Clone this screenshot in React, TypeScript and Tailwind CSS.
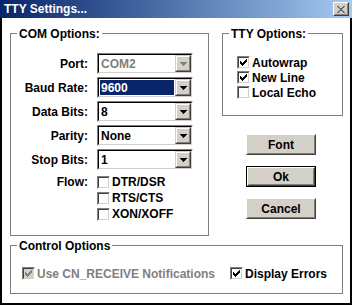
import React from "react";

const CheckMark = ({ color }: { color: string }) => (
  <svg width="9" height="9" viewBox="0 0 9 9" shapeRendering="crispEdges">
    {[
      [1, 3],
      [2, 4],
      [3, 5],
      [4, 4],
      [5, 3],
      [6, 2],
      [7, 1],
    ].map(([x, y]) => (
      <rect key={x} x={x} y={y} width="1" height="3" fill={color} />
    ))}
  </svg>
);

const CheckBox = ({ checked, disabled }: { checked?: boolean; disabled?: boolean }) => (
  <div className="w-[13px] h-[13px] shrink-0 border border-t-[#808080] border-l-[#808080] border-b-white border-r-white">
    <div
      className={
        "w-full h-full border border-t-[#404040] border-l-[#404040] border-b-[#d4d0c8] border-r-[#d4d0c8] " +
        (disabled ? "bg-[#d4d0c8]" : "bg-white")
      }
    >
      {checked && <CheckMark color={disabled ? "#808080" : "#000000"} />}
    </div>
  </div>
);

const CheckRow = ({
  label,
  checked,
  disabled,
  className,
}: {
  label: string;
  checked?: boolean;
  disabled?: boolean;
  className?: string;
}) => (
  <div className={"flex items-center gap-[2px] h-[15px] " + (className ?? "")}>
    <CheckBox checked={checked} disabled={disabled} />
    <span className={"leading-[14px] whitespace-nowrap " + (disabled ? "text-[#808080]" : "text-black")}>{label}</span>
  </div>
);

const Arrow = ({ color }: { color: string }) => (
  <svg width="7" height="4" viewBox="0 0 7 4" shapeRendering="crispEdges">
    <rect x="0" y="0" width="7" height="1" fill={color} />
    <rect x="1" y="1" width="5" height="1" fill={color} />
    <rect x="2" y="2" width="3" height="1" fill={color} />
    <rect x="3" y="3" width="1" height="1" fill={color} />
  </svg>
);

const DropButton = ({ disabled }: { disabled?: boolean }) => (
  <div className="w-[16px] h-full shrink-0 bg-[#d4d0c8] border border-t-[#d4d0c8] border-l-[#d4d0c8] border-b-[#404040] border-r-[#404040]">
    <div className="w-full h-full border border-t-white border-l-white border-b-[#808080] border-r-[#808080] flex items-center justify-center">
      <Arrow color={disabled ? "#808080" : "#000000"} />
    </div>
  </div>
);

const Combo = ({ value, selected, disabled }: { value: string; selected?: boolean; disabled?: boolean }) => (
  <div className="w-[96px] h-[21px] border border-t-[#808080] border-l-[#808080] border-b-white border-r-white">
    <div className="w-full h-full flex border border-t-black border-l-black border-b-[#d4d0c8] border-r-[#d4d0c8] bg-white">
      <div className="flex-1 p-[1px]">
        <div
          className={
            "h-full flex items-center pl-[1px] leading-[14px] " +
            (selected ? "bg-[#0a246a] text-white" : disabled ? "text-[#808080]" : "text-black")
          }
        >
          {value}
        </div>
      </div>
      <DropButton disabled={disabled} />
    </div>
  </div>
);

const Button = ({ label, isDefault }: { label: string; isDefault?: boolean }) => (
  <div className={"w-[70px] h-[21px] " + (isDefault ? "border border-black" : "")}>
    <div className="w-full h-full bg-[#d4d0c8] border border-t-white border-l-white border-b-[#404040] border-r-[#404040]">
      <div className="w-full h-full border border-t-[#d4d0c8] border-l-[#d4d0c8] border-b-[#808080] border-r-[#808080] flex items-center justify-center leading-[14px]">
        {label}
      </div>
    </div>
  </div>
);

const Group = ({
  title,
  className,
  children,
}: {
  title: string;
  className: string;
  children: React.ReactNode;
}) => (
  <div className={"relative border border-[#808080] shrink-0 " + className}>
    <span className="absolute top-[-7px] left-[6px] px-[2px] bg-white leading-[14px] whitespace-nowrap">{title}</span>
    {children}
  </div>
);

const FieldRow = ({ label, children }: { label: string; children: React.ReactNode }) => (
  <div className="flex items-center h-[21px]">
    <span className="w-[77px] text-right leading-[14px] whitespace-nowrap">{label}</span>
    <div className="ml-[9px]">{children}</div>
  </div>
);

export default function App() {
  return (
    <div className="w-[352px] h-[305px] flex flex-col bg-white text-black text-[12px] font-bold font-['Liberation_Sans',Arial,sans-serif] overflow-hidden">
      {/* Title bar */}
      <div className="h-[18px] shrink-0 flex items-center justify-between bg-gradient-to-r from-[#0a246a] to-[#a6caf0] pl-[4px] pr-[3px]">
        <span className="text-white leading-[14px] whitespace-nowrap">TTY Settings...</span>
        <div className="w-[16px] h-[14px] bg-[#d4d0c8] border border-t-white border-l-white border-b-[#404040] border-r-[#404040]">
          <div className="w-full h-full border border-t-[#d4d0c8] border-l-[#d4d0c8] border-b-[#808080] border-r-[#808080] flex items-center justify-center">
            <svg width="8" height="7" viewBox="0 0 8 7" shapeRendering="crispEdges">
              {[0, 1, 2, 3, 4, 5, 6].map((i) => (
                <React.Fragment key={i}>
                  <rect x={i} y={i} width="2" height="1" fill="#6b6b6b" />
                  <rect x={6 - i} y={i} width="2" height="1" fill="#6b6b6b" />
                </React.Fragment>
              ))}
            </svg>
          </div>
        </div>
      </div>

      {/* Body */}
      <div className="flex-1 flex flex-col border-x-2 border-b-2 border-black pl-[8px]">
        <div className="flex mt-[15px] gap-[13px]">
          {/* COM Options */}
          <Group title="COM Options:" className="w-[199px] h-[203px]">
            <div className="flex flex-col pt-[19px] gap-[3px]">
              <FieldRow label="Port:">
                <Combo value="COM2" disabled />
              </FieldRow>
              <FieldRow label="Baud Rate:">
                <Combo value="9600" selected />
              </FieldRow>
              <FieldRow label="Data Bits:">
                <Combo value="8" />
              </FieldRow>
              <FieldRow label="Parity:">
                <Combo value="None" />
              </FieldRow>
              <FieldRow label="Stop Bits:">
                <Combo value="1" />
              </FieldRow>
            </div>
            <div className="flex mt-[4px]">
              <span className="w-[77px] text-right leading-[16px] whitespace-nowrap">Flow:</span>
              <div className="ml-[9px] flex flex-col">
                <CheckRow label="DTR/DSR" className="h-[16px]" />
                <CheckRow label="RTS/CTS" className="h-[16px]" />
                <CheckRow label="XON/XOFF" className="h-[16px]" />
              </div>
            </div>
          </Group>

          {/* Right column */}
          <div className="w-[121px] flex flex-col">
            <Group title="TTY Options:" className="w-[121px] h-[83px]">
              <div className="flex flex-col pt-[21px] pl-[14px]">
                <CheckRow label="Autowrap" checked />
                <CheckRow label="New Line" checked />
                <CheckRow label="Local Echo" />
              </div>
            </Group>
            <div className="flex flex-col gap-[11px] mt-[18px] ml-[24px]">
              <Button label="Font" />
              <Button label="Ok" isDefault />
              <Button label="Cancel" />
            </div>
          </div>
        </div>

        {/* Control Options */}
        <Group title="Control Options" className="w-[333px] h-[49px] mt-[9px]">
          <div className="flex pt-[20px] pl-[11px]">
            <CheckRow label="Use CN_RECEIVE Notifications" checked disabled className="w-[208px]" />
            <CheckRow label="Display Errors" checked />
          </div>
        </Group>
      </div>
    </div>
  );
}
